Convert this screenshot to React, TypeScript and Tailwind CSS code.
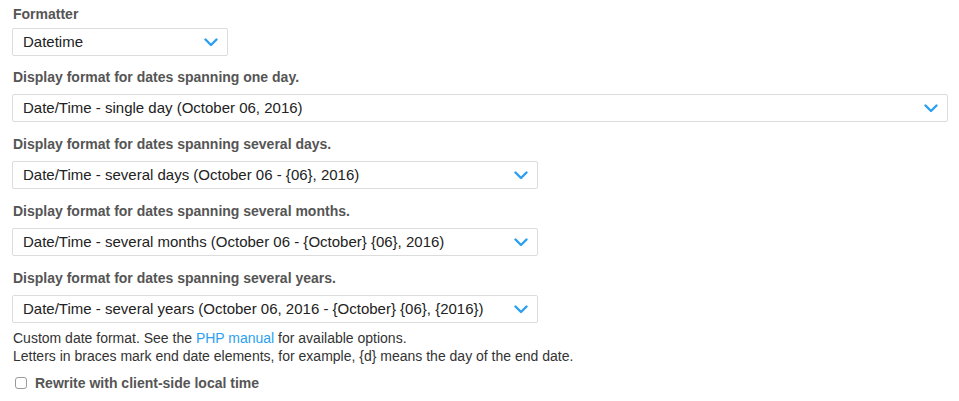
import React from "react";

const font = { fontFamily: '"Liberation Sans", Arial, sans-serif' };

function Chevron() {
  return (
    <svg width="14" height="9" viewBox="0 0 14 9" className="shrink-0">
      <path d="M1.5 1.5 L7 7 L12.5 1.5" fill="none" stroke="#2c9ff0" strokeWidth="2.4" strokeLinecap="round" strokeLinejoin="round" />
    </svg>
  );
}

function Select({ value, width }: { value: string; width: string }) {
  return (
    <div className={`${width} h-[28px] flex items-center justify-between border border-[#dcdcdc] rounded-[2px] bg-white pl-[10px] pr-[9px]`}>
      <span className="text-[15px] text-[#222]">{value}</span>
      <Chevron />
    </div>
  );
}

const fields = [
  { label: "Display format for dates spanning one day.", value: "Date/Time - single day (October 06, 2016)", width: "w-[936px]" },
  { label: "Display format for dates spanning several days.", value: "Date/Time - several days (October 06 - {06}, 2016)", width: "w-[526px]" },
  { label: "Display format for dates spanning several months.", value: "Date/Time - several months (October 06 - {October} {06}, 2016)", width: "w-[526px]" },
  { label: "Display format for dates spanning several years.", value: "Date/Time - several years (October 06, 2016 - {October} {06}, {2016})", width: "w-[526px]" },
];

export default function App() {
  return (
    <div className="bg-white w-[959px] h-[401px] px-[12px] pt-[4px]" style={font}>
      <div className="text-[14px] font-bold text-[#555] leading-[20px] pl-[1px]">Formatter</div>
      <div className="mt-[4px]">
        <Select value="Datetime" width="w-[216px]" />
      </div>
      {fields.map((f, i) => (
        <div key={f.label} className={i === 0 ? "mt-[11px]" : "mt-[12px]"}>
          <div className="text-[14px] font-bold text-[#555] leading-[20px] pl-[1px]">{f.label}</div>
          <div className="mt-[7px]">
            <Select value={f.value} width={f.width} />
          </div>
        </div>
      ))}
      <div className="mt-[6px] text-[14px] leading-[18px] text-[#333] pl-[1px]">
        <div>
          Custom date format. See the <span className="text-[#2c9ff0]">PHP manual</span> for available options.
        </div>
        <div>Letters in braces mark end date elements, for example, {"{d}"} means the day of the end date.</div>
      </div>
      <div className="mt-[10px] flex items-center gap-[8px] pl-[3px]">
        <div className="w-[12px] h-[12px] border border-[#9a9a9a] rounded-[3px] bg-white" />
        <span className="text-[14px] font-bold text-[#555] leading-[16px]">Rewrite with client-side local time</span>
      </div>
    </div>
  );
}
